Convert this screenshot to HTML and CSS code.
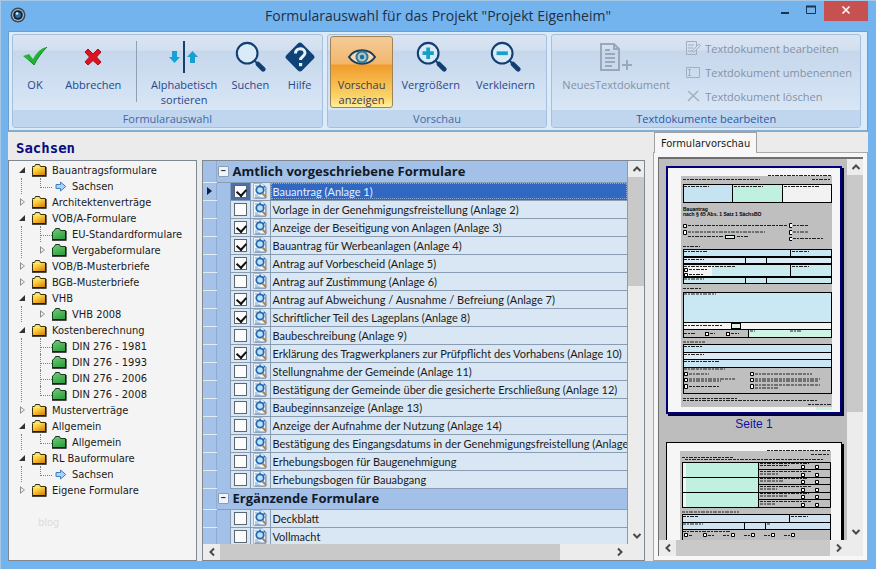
FILE: index.html
```html
<!DOCTYPE html>
<html lang="de">
<head>
  <meta charset="UTF-8" />
  <meta name="viewport" content="width=device-width, initial-scale=1.0"/>
  <title>Formularauswahl</title>
  <link rel="stylesheet" href="styles.css">
</head>
<body>
  <svg class="defs" aria-hidden="true">
    <defs>
      <linearGradient id="gold" x1="0" y1="0" x2="0.6" y2="1">
        <stop offset="0" stop-color="#fff27a"/><stop offset="0.5" stop-color="#fbd33c"/><stop offset="1" stop-color="#d98e10"/>
      </linearGradient>
      <linearGradient id="green" x1="0" y1="0" x2="0.6" y2="1">
        <stop offset="0" stop-color="#6fd078"/><stop offset="1" stop-color="#36a044"/>
      </linearGradient>
      <symbol id="folder" viewBox="0 0 16 14">
        <path d="M1.500 4.500V12.500H14.500V3.500H9.500L8.500 1.500H4.500L3.500 3.500H1.500z" fill="url(#gold)" stroke="#3a2c10"/>
        <path d="M1 13.200H15V4" fill="none" stroke="#111" stroke-width="1.200"/>
        <path d="M2 4.500H10" stroke="#f5e58a" fill="none"/>
      </symbol>
      <symbol id="folder-green" viewBox="0 0 16 14">
        <path d="M1.500 5V12.500H14.500V3.500H9.500L8.500 1.500H4.500L3.500 3.500L1.500 5z" fill="url(#green)" stroke="#143d1a"/>
        <path d="M1 13.200H15V4" fill="none" stroke="#111" stroke-width="1.200"/>
      </symbol>
      <symbol id="arrow" viewBox="0 0 12 11">
        <path d="M1 3.500H5.500V1L10.800 5.500L5.500 10V7.500H1z" fill="#a9d3f7" stroke="#3f7fc4"/>
      </symbol>
      <symbol id="preview" viewBox="0 0 16 16">
        <path d="M1.500 0.500H10L13.500 4V15.500H1.500z" fill="#eef6fc" stroke="#9db8d4"/>
        <path d="M3 3H6M3 12H6M3 14H8" stroke="#7fa3c8"/>
        <path d="M14 4V15H3" fill="none" stroke="#7c8ea6"/>
        <circle cx="8" cy="7" r="3.700" fill="#b8e3fa" stroke="#2767b0" stroke-width="1.800"/>
        <path d="M8 1.500V4M13 3L11 5" stroke="#2767b0" stroke-width="1.500"/>
        <path d="M10.500 10.500L14 14" stroke="#a8845a" stroke-width="2"/>
      </symbol>
      <symbol id="up" viewBox="0 0 10 10"><path d="M1.500 7L5 3.500L8.500 7" fill="none" stroke="#4a4a4a" stroke-width="2"/></symbol>
      <symbol id="down" viewBox="0 0 10 10"><path d="M1.500 3L5 6.500L8.500 3" fill="none" stroke="#4a4a4a" stroke-width="2"/></symbol>
      <symbol id="left" viewBox="0 0 10 10"><path d="M7 1.500L3.500 5L7 8.500" fill="none" stroke="#4a4a4a" stroke-width="2"/></symbol>
      <symbol id="right" viewBox="0 0 10 10"><path d="M3 1.500L6.500 5L3 8.500" fill="none" stroke="#4a4a4a" stroke-width="2"/></symbol>
      <symbol id="lens" viewBox="0 0 34 34">
        <circle cx="14" cy="13" r="11" fill="#d9ebf8" stroke="#123f70" stroke-width="2.200"/>
        <path d="M22 21L25 24" stroke="#123f70" stroke-width="2"/>
        <path d="M25.500 24.500L31 30" stroke="#123f70" stroke-width="5" stroke-linecap="round"/>
      </symbol>
    </defs>
  </svg>

  <div class="window">
    <header class="titlebar">
      <svg class="app-icon" viewBox="0 0 16 16">
        <circle cx="8" cy="8" r="7.500" fill="#3b4a58"/>
        <circle cx="8" cy="8" r="6" fill="#a9bccb"/>
        <circle cx="8" cy="8" r="4.800" fill="#10202f"/>
        <circle cx="8" cy="8" r="3" fill="#2d6ea5"/>
        <circle cx="7" cy="6.500" r="1.300" fill="#d5ecfa"/>
      </svg>
      <h1>Formularauswahl für das Projekt "Projekt Eigenheim"</h1>
      <div class="window-buttons">
        <button type="button" aria-label="Minimieren"><svg viewBox="0 0 12 12"><path d="M2 9H10" stroke="#1c3350" stroke-width="2"/></svg></button>
        <button type="button" aria-label="Maximieren"><svg viewBox="0 0 12 12"><path d="M1.500 2.500H10.500V9.500H1.500z" fill="none" stroke="#1c3350"/><path d="M1 2.500H11" stroke="#1c3350" stroke-width="2"/></svg></button>
        <button type="button" class="close" aria-label="Schließen"><svg viewBox="0 0 12 12"><path d="M2.500 2.500L9.500 9.500M9.500 2.500L2.500 9.500" stroke="#fff" stroke-width="1.600"/></svg></button>
      </div>
    </header>

    <nav class="ribbon">
      <section class="group">
        <div class="tools">
          <button type="button" class="tool">
            <svg viewBox="0 0 32 32"><path d="M4 15L10 13L14 18C18 11 22 7 28 6C22 12 18 18 15 24z" fill="#25b335"/><path d="M10 19L15 24C18 18 22 12 28 6" fill="none" stroke="#128a22"/></svg>
            <span>OK</span>
          </button>
          <button type="button" class="tool">
            <svg viewBox="0 0 32 32"><path d="M8 11L11 8L16 13L21 8L24 11L19.500 16L24 21L21 24L16 19.500L11 24L8 21L12.500 16z" fill="#dc1420" stroke="#a80d16"/></svg>
            <span>Abbrechen</span>
          </button>
          <span class="separator"></span>
          <button type="button" class="tool">
            <svg viewBox="0 0 32 32"><path d="M15 0H17V32H15z" fill="#123f70"/><path d="M4 10H9V16H12L6.500 22L1 16H4z" fill="#18a0d4"/><path d="M22 22H27V16H30L24.500 10L19 16H22z" fill="#18a0d4"/></svg>
            <span>Alphabetisch<br>sortieren</span>
          </button>
          <button type="button" class="tool">
            <svg viewBox="0 0 34 34"><use href="#lens"/></svg>
            <span>Suchen</span>
          </button>
          <button type="button" class="tool">
            <svg viewBox="0 0 32 32"><rect x="5" y="5" width="22" height="22" rx="3" transform="rotate(45 16 16)" fill="#0f4377"/><path d="M11.500 12.500C11.500 6 21 6.500 21 12C21 15.500 16.500 15.500 16.500 19" fill="none" stroke="#e8f1fa" stroke-width="3"/><rect x="15" y="22" width="3.200" height="3.200" fill="#e8f1fa"/></svg>
            <span>Hilfe</span>
          </button>
        </div>
        <h2>Formularauswahl</h2>
      </section>

      <section class="group">
        <div class="tools tools-zoom">
          <button type="button" class="tool active" aria-pressed="true">
            <svg viewBox="0 0 32 32"><path d="M3 16C9 7 23 7 29 16C23 25 9 25 3 16z" fill="#f6d9b3" stroke="#1d3c58" stroke-width="2"/><circle cx="16" cy="16" r="5.500" fill="#a6c6cf" stroke="#2b7896" stroke-width="2"/><circle cx="16" cy="16" r="2.200" fill="#286a89"/></svg>
            <span>Vorschau<br>anzeigen</span>
          </button>
          <button type="button" class="tool">
            <svg viewBox="0 0 34 34"><use href="#lens"/><path d="M8 13H20M14 7V19" stroke="#18a0c4" stroke-width="4"/></svg>
            <span>Vergrößern</span>
          </button>
          <button type="button" class="tool">
            <svg viewBox="0 0 34 34"><use href="#lens"/><path d="M8 13H20" stroke="#18a0c4" stroke-width="4"/></svg>
            <span>Verkleinern</span>
          </button>
        </div>
        <h2>Vorschau</h2>
      </section>

      <section class="group group-docs">
        <div class="tools tools-docs">
          <button type="button" class="tool" disabled>
            <svg viewBox="0 0 32 32"><path d="M1 3H14L19 8V29H1z M14 3V8H19" fill="none" stroke="#9ba8b8" stroke-width="2"/><path d="M5 9H10M5 13H15M5 17H15M5 21H15M5 25H12M22 24H32M27 19V29" stroke="#9ba8b8" stroke-width="2"/></svg>
            <span>NeuesTextdokument</span>
          </button>
          <div class="tool-list">
            <button type="button" class="tool-row" disabled>
              <svg viewBox="0 0 16 16"><path d="M1.500 1.500H11.500V14.500H1.500zM3 5H9M3 8H8M3 11H7" fill="none" stroke="#a3afbd"/><path d="M7 11L14 4L15.500 5.500L9 12z" fill="#d3dfec" stroke="#a3afbd"/></svg>
              Textdokument bearbeiten
            </button>
            <button type="button" class="tool-row" disabled>
              <svg viewBox="0 0 16 16"><path d="M1.500 3.500H14.500V13.500H1.500zM4.500 5.500V11.500M3 5.500H6M3 11.500H6" fill="none" stroke="#a3afbd"/></svg>
              Textdokument umbenennen
            </button>
            <button type="button" class="tool-row" disabled>
              <svg viewBox="0 0 16 16"><path d="M3 3L14 13M13 3L3 13" fill="none" stroke="#a3afbd" stroke-width="1.500"/></svg>
              Textdokument löschen
            </button>
          </div>
        </div>
        <h2>Textdokumente bearbeiten</h2>
      </section>
    </nav>

    <main class="client">
      <h2 class="region">Sachsen</h2>

      <aside class="tree">
        <ul>
          <li class="open"><div><svg><use href="#folder"/></svg>Bauantragsformulare</div>
            <ul>
              <li class="leaf target"><div><svg><use href="#arrow"/></svg>Sachsen</div></li>
            </ul>
          </li>
          <li class="closed"><div><svg><use href="#folder"/></svg>Architektenverträge</div></li>
          <li class="open"><div><svg><use href="#folder"/></svg>VOB/A-Formulare</div>
            <ul>
              <li class="leaf"><div><svg><use href="#folder-green"/></svg>EU-Standardformulare</div></li>
              <li class="closed"><div><svg><use href="#folder-green"/></svg>Vergabeformulare</div></li>
            </ul>
          </li>
          <li class="closed"><div><svg><use href="#folder"/></svg>VOB/B-Musterbriefe</div></li>
          <li class="closed"><div><svg><use href="#folder"/></svg>BGB-Musterbriefe</div></li>
          <li class="open"><div><svg><use href="#folder"/></svg>VHB</div>
            <ul>
              <li class="closed"><div><svg><use href="#folder-green"/></svg>VHB 2008</div></li>
            </ul>
          </li>
          <li class="open"><div><svg><use href="#folder"/></svg>Kostenberechnung</div>
            <ul>
              <li class="leaf"><div><svg><use href="#folder-green"/></svg>DIN 276 - 1981</div></li>
              <li class="leaf"><div><svg><use href="#folder-green"/></svg>DIN 276 - 1993</div></li>
              <li class="leaf"><div><svg><use href="#folder-green"/></svg>DIN 276 - 2006</div></li>
              <li class="leaf"><div><svg><use href="#folder-green"/></svg>DIN 276 - 2008</div></li>
            </ul>
          </li>
          <li class="closed"><div><svg><use href="#folder"/></svg>Musterverträge</div></li>
          <li class="open"><div><svg><use href="#folder"/></svg>Allgemein</div>
            <ul>
              <li class="leaf"><div><svg><use href="#folder-green"/></svg>Allgemein</div></li>
            </ul>
          </li>
          <li class="open"><div><svg><use href="#folder"/></svg>RL Bauformulare</div>
            <ul>
              <li class="leaf target"><div><svg><use href="#arrow"/></svg>Sachsen</div></li>
            </ul>
          </li>
          <li class="closed"><div><svg><use href="#folder"/></svg>Eigene Formulare</div></li>
        </ul>
        <p class="watermark">blog</p>
      </aside>

      <section class="forms">
        <div class="forms-body">
          <table>
            <colgroup><col class="c-mark"><col class="c-indent"><col class="c-check"><col class="c-icon"><col></colgroup>
            <tbody id="formRows"></tbody>
          </table>
        </div>
        <div class="vscroll">
          <button type="button" aria-label="Nach oben"><svg><use href="#up"/></svg></button>
          <div class="track"><div class="thumb thumb-list"></div></div>
          <button type="button" aria-label="Nach unten"><svg><use href="#down"/></svg></button>
        </div>
        <div class="hscroll">
          <button type="button" aria-label="Nach links"><svg><use href="#left"/></svg></button>
          <div class="track"><div class="thumb thumb-wide"></div></div>
          <button type="button" aria-label="Nach rechts"><svg><use href="#right"/></svg></button>
        </div>
      </section>

      <section class="preview">
        <div class="tabs"><button type="button" class="tab">Formularvorschau</button></div>
        <div class="tab-panel">
          <div class="viewer">
            <div class="pages">
              <div class="page page-current">
                <svg viewBox="668 167 172 244">
                  <rect x="681" y="175" width="151" height="231" fill="#bfbfbf"/>
                  <g class="ink">
                    <path d="M768 174.500H832M683 178.500H760M812 178.500H831"/>
                    <path d="M688 224.500H787M688 231H765M688 235.500H724M737 235.500H749M793 224.500H809M793 231H808M793 237.500H823"/>
                    <path d="M683 245.500H700M683 287.500H702M683 341H705"/>
                    <path d="M683 397.500H737M683 399.500H817M808 403.500H831"/>
                  </g>
                  <text x="683" y="209.500" class="doc-title">Bauantrag</text>
                  <text x="683" y="214.500" class="doc-sub">nach § 65 Abs. 1 Satz 1 SächsBO</text>
                  <g class="box">
                    <rect x="683.500" y="183.500" width="49" height="18" fill="#c5e3f2"/>
                    <rect x="732.500" y="183.500" width="50" height="18" fill="#bff0e0"/>
                    <rect x="782.500" y="183.500" width="49" height="18" fill="#f2f2f2"/>
                    <path d="M683.500 223.500h3v3h-3zM683.500 229.500h3v4h-3z" fill="#fff"/>
                    <path d="M792 222.500H789.500V226.500H792M792 229.500H789.500V233.500H792M792 236.500H789.500V239.500H792" fill="#fff"/>
                    <rect x="725.500" y="234.500" width="9" height="3" fill="#d9f5ea"/>
                    <rect x="683.500" y="248.500" width="148" height="7" fill="#c9e6f3"/>
                    <rect x="683.500" y="256.500" width="148" height="6" fill="#dbeaf4"/>
                    <rect x="683.500" y="263.500" width="148" height="12" fill="#c9eaee"/>
                    <rect x="683.500" y="276.500" width="148" height="6" fill="#c9eaee"/>
                    <path d="M790.500 248V256M745.500 256V263M766.500 256V263M790.500 264V276M745.500 276V283M766.500 276V283"/>
                    <rect x="683.500" y="291.500" width="148" height="30" fill="#c9e8f3"/>
                    <rect x="683.500" y="321.500" width="148" height="7" fill="#f4f4f4"/>
                    <rect x="731.500" y="322.500" width="9" height="5" fill="#d9f5ea"/>
                    <rect x="683.500" y="328.500" width="65" height="8" fill="#bfbfbf"/>
                    <rect x="748.500" y="328.500" width="83" height="8" fill="#cdf3e6"/>
                    <rect x="705.500" y="331.500" width="3" height="3" fill="#fff"/>
                    <rect x="726.500" y="331.500" width="3" height="3" fill="#fff"/>
                    <rect x="683.500" y="343.500" width="148" height="8" fill="#c9e6f3"/>
                    <rect x="683.500" y="351.500" width="148" height="7" fill="#dbeaf4"/>
                    <rect x="683.500" y="358.500" width="148" height="8" fill="#c9e6f3"/>
                    <rect x="683.500" y="366.500" width="148" height="26" fill="#bfbfbf"/>
                    <path d="M684.500 371.500h3v3h-3zM684.500 377.500h3v3h-3zM684.500 383.500h3v4h-3zM750.500 371.500h3v3h-3zM750.500 377.500h3v3h-3zM750.500 383.500h3v4h-3z" fill="#fff"/>
                  </g>
                  <path d="M684 265H712V275H684z" fill="#f4f4f4"/>
                  <path d="M684.500 267.500h3v3h-3zM684.500 272.500h3v3h-3z" class="box" fill="#fff"/>
                  <g class="ink">
                    <path d="M684 185.500H709M734 185.500H763M784 185.500H820"/>
                    <path d="M684 250.500H707M792 250.500H809M684 258.500H704M684 265.500H736M792 265.500H809M689 268.500H708M689 273.500H703M684 278H704"/>
                    <path d="M684 293H716M684 324.500H722M684 332.500H695M710 332.500H715M731 332.500H739M750 330H755M790 330H801"/>
                    <path d="M684 345.500H703M684 353.500H704M684 360.500H719M684 368H725M689 373H709M755 373H812M689 378H735M689 380H721M755 378H820M755 380H818M689 385.500H719M755 384H820M755 387H778"/>
                  </g>
                  <rect x="816" y="406" width="16" height="3" fill="#cdf3e6"/>
                </svg>
              </div>
              <a href="#seite-1" class="page-label">Seite 1</a>
              <div class="page page-next">
                <svg viewBox="668 444 174 246">
                  <rect x="681" y="452" width="151" height="230" fill="#bfbfbf"/>
                  <g class="box">
                    <rect x="683.500" y="463.500" width="76" height="15" fill="#bff0e0"/>
                    <rect x="683.500" y="478.500" width="76" height="15" fill="#bff0e0"/>
                    <rect x="683.500" y="493.500" width="76" height="15" fill="#bff0e0"/>
                    <path d="M759.500 463.500H831.500V508.500H759.500M759.500 470.500H831.500M759.500 478.500H831.500M759.500 485.500H831.500M759.500 493.500H831.500M759.500 500.500H831.500" fill="none"/>
                    <path d="M802.500 466.500h3v3h-3zM816.500 466.500h3v3h-3zM802.500 474.500h3v3h-3zM816.500 474.500h3v3h-3zM802.500 481.500h3v3h-3zM816.500 481.500h3v3h-3zM802.500 489.500h3v3h-3zM816.500 489.500h3v3h-3zM802.500 496.500h3v3h-3zM816.500 496.500h3v3h-3zM802.500 504.500h3v3h-3zM816.500 504.500h3v3h-3z" fill="#fff"/>
                    <rect x="683.500" y="515.500" width="148" height="8" fill="#cfe3f2"/>
                    <rect x="683.500" y="523.500" width="148" height="7" fill="#cfe3f2"/>
                    <rect x="683.500" y="530.500" width="148" height="40" fill="#bfbfbf"/>
                    <path d="M790.500 516V523M745.500 523V530M766.500 523V530"/>
                    <path d="M685.500 534.500h3v3h-3zM704.500 534.500h3v3h-3zM732.500 534.500h3v3h-3zM752.500 534.500h3v3h-3zM772.500 534.500h3v3h-3zM792.500 534.500h3v3h-3z" fill="#fff"/>
                  </g>
                  <path d="M684 464H687V478H684zM684 479H687V493H684zM684 494H687V508H684z" fill="#f4f4f4"/>
                  <g class="ink">
                    <path d="M768 451.500H832M812 455.500H831M683 458.500H735M686 460.500H824M683 513H740"/>
                    <path d="M761 464.500H810M761 466.500H790M761 472.500H812M761 475H780M761 479.500H808M761 482H785M761 487.500H812M761 490H778M761 494.500H810M761 497H788M761 502.500H812M761 505H777"/>
                    <path d="M684 517.500H700M792 517.500H809M684 525H704M768 525H772M684 532.500H732M690 536.500H693M709 536.500H716M724 536.500H731M745 536.500H751M765 536.500H771M785 536.500H791"/>
                  </g>
                </svg>
              </div>
            </div>
            <div class="vscroll">
              <button type="button" aria-label="Nach oben"><svg><use href="#up"/></svg></button>
              <div class="track"><div class="thumb thumb-pages"></div></div>
              <button type="button" aria-label="Nach unten"><svg><use href="#down"/></svg></button>
            </div>
            <div class="hscroll">
              <button type="button" aria-label="Nach links"><svg><use href="#left"/></svg></button>
              <div class="track"><div class="thumb"></div></div>
              <button type="button" aria-label="Nach rechts"><svg><use href="#right"/></svg></button>
            </div>
          </div>
        </div>
      </section>
    </main>
  </div>

  <script src="script.js"></script>
</body>
</html>
```

FILE: styles.css
```css
* {
  box-sizing: border-box;
}

body {
  margin: 0;
  font-family: "DejaVu Sans Condensed", "Open Sans", sans-serif;
  font-size: 11px;
  color: #1a1a1a;
}

h1, h2, p, ul {
  margin: 0;
  padding: 0;
  font-weight: normal;
}

button {
  margin: 0;
  padding: 0;
  border: 0;
  background: none;
  font: inherit;
  color: inherit;
}

.defs {
  position: absolute;
  width: 0;
  height: 0;
}

.window {
  display: flex;
  flex-direction: column;
  height: 100vh;
  padding: 0 8px 8px 7px;
  background: #74b4ee;
  border: 1px solid #a6c8e4;
  border-width: 1px 0 0 1px;
  overflow: hidden;
}

/* title bar */
.titlebar {
  display: grid;
  grid-template-columns: 96px 1fr 96px;
  height: 30px;
  font-family: "Open Sans", "Noto Sans", sans-serif;
}

.app-icon {
  width: 16px;
  height: 16px;
  margin: 6px 0 0 2px;
}

.titlebar h1 {
  font-size: 14px;
  line-height: 29px;
  text-align: center;
  color: #1d3048;
  white-space: nowrap;
}

.window-buttons {
  display: flex;
  justify-content: flex-end;
  height: 20px;
}

.window-buttons button {
  width: 26px;
}

.window-buttons svg {
  width: 12px;
  height: 12px;
}

.window-buttons .close {
  width: 44px;
  background: #c75050;
}

/* ribbon */
.ribbon {
  display: grid;
  grid-template-columns: 311fr 221fr 310fr;
  gap: 4px;
  padding: 2px 6px 2px 3px;
  background: #dcebf9;
  border: 1px solid #6d9dc9;
  border-bottom: 2px solid #86abd0;
  font-family: "Open Sans", "Noto Sans", sans-serif;
}

.group {
  display: flex;
  flex-direction: column;
  border: 1px solid #a5bfdc;
  border-radius: 3px;
  background: linear-gradient(#dae5f3 0, #d2dfef 15px, #c6d7ec 16px, #d8e6f6 75px);
}

.group h2 {
  background: #c0d6ef;
  color: #4468a6;
  font-size: 11px;
  line-height: 17px;
  text-align: center;
}

.group-docs h2 {
  color: #2b58a8;
}

.tools {
  display: flex;
  justify-content: space-between;
  height: 75px;
  padding: 1px 6px 2px;
}

.tools-zoom {
  justify-content: flex-start;
  padding: 1px 2px 2px;
}

.tools-docs {
  padding: 1px 8px 2px 10px;
}

.tool {
  display: flex;
  flex-direction: column;
  align-items: center;
  min-width: 32px;
  padding-top: 5px;
  font-size: 11px;
  line-height: 15px;
  color: #27478c;
}

.tool svg {
  width: 32px;
  height: 32px;
  margin-bottom: 4px;
  flex: none;
}

.tools-zoom .tool {
  padding: 5px 8px 0;
}

.tools-zoom .active {
  padding: 4px 7px 0;
  border: 1px solid #a08354;
  border-radius: 3px;
  background: linear-gradient(#f3cb98 0, #f2b76c 27px, #f19b2c 28px, #fad568 60px, #fff0a0);
  color: #3c3a4e;
}

.separator {
  width: 1px;
  margin: 5px 0 6px;
  background: #8f9fb4;
}

.tool:disabled, .tool-row:disabled {
  color: #8592a5;
}

.tool-list {
  display: flex;
  flex-direction: column;
}

.tool-row {
  display: flex;
  align-items: center;
  gap: 4px;
  height: 24px;
  white-space: nowrap;
}

.tool-row svg {
  width: 16px;
  height: 16px;
}

/* client area */
.client {
  flex: 1;
  min-height: 0;
  display: grid;
  grid-template-columns: 189px minmax(0, 1fr) 218px;
  grid-template-rows: 28px minmax(0, 1fr);
  column-gap: 5px;
  background: #ebebeb;
}

.region {
  grid-column: 1 / 3;
  padding-left: 8px;
  font-family: "DejaVu Sans Mono", monospace;
  font-size: 14px;
  font-weight: bold;
  line-height: 32px;
  color: #0b0b80;
}

/* tree */
.tree {
  padding: 1px 0 0 7px;
  background: #f4f4f4;
  border: 1px solid #7f8790;
  overflow: hidden;
}

.tree ul {
  list-style: none;
}

.tree li {
  position: relative;
}

.tree li div {
  display: flex;
  align-items: center;
  gap: 5px;
  height: 16px;
  padding-left: 15px;
  white-space: nowrap;
}

.tree svg {
  width: 16px;
  height: 14px;
}

.tree li ul {
  margin-left: 5px;
  padding-left: 14px;
  border-left: 1px dotted #808080;
}

.tree .leaf::before {
  content: "";
  position: absolute;
  top: 0;
  left: 4px;
  width: 11px;
  height: 9px;
  border-left: 1px dotted #808080;
  border-bottom: 1px dotted #808080;
}

.tree .leaf:not(:last-child)::after {
  content: "";
  position: absolute;
  top: 9px;
  left: 4px;
  height: 7px;
  border-left: 1px dotted #808080;
}

.tree .target svg {
  width: 12px;
  height: 11px;
  margin-left: 4px;
}

.tree .open::before, .tree .closed::before {
  content: "";
  position: absolute;
  top: 5px;
  left: 3px;
  width: 6px;
  height: 6px;
  background: #333;
  clip-path: polygon(100% 0, 100% 100%, 0 100%);
}

.tree .closed::before {
  top: 4px;
  left: 4px;
  width: 5px;
  height: 8px;
  background: #8c8c8c;
  clip-path: polygon(0 0, 100% 50%, 0 100%, 0 0, 1px 2px, 1px 6px, 4px 50%, 1px 2px);
}

.watermark {
  padding: 18px 0 0 22px;
  color: #dcdcdc;
}

/* list of forms and scroll bars */
.forms, .viewer {
  display: grid;
  grid-template-columns: minmax(0, 1fr) 16px;
  grid-template-rows: minmax(0, 1fr) 16px;
  background: #ececec;
}

.forms {
  border: 1px solid #7f8790;
}

.forms-body {
  overflow: hidden;
  background: #a2c0e8;
}

.forms table {
  width: 100%;
  table-layout: fixed;
  border-collapse: collapse;
  font-family: Lato, "Liberation Sans", sans-serif;
  font-size: 11px;
}

.c-mark {
  width: 13px;
}

.c-indent {
  width: 14px;
}

.c-check {
  width: 20px;
}

.c-icon {
  width: 20px;
}

.forms td {
  height: 18px;
  padding: 0;
  border: 1px solid #8a9cb2;
  border-width: 0 1px 1px 0;
  background: #d9e7f4;
  line-height: 17px;
  white-space: nowrap;
  overflow: hidden;
}

.forms td:first-child {
  background: #a5c3ea;
  border-color: #e0ecf8 #8eabd0;
}

.forms td.indent {
  background: #a2c0e8;
  border-bottom: 0;
}

.forms .head td {
  height: 21px;
  background: #a2c0e8;
  font-family: "Open Sans", "Noto Sans", sans-serif;
}

.forms .head button {
  display: flex;
  align-items: center;
  gap: 4px;
  font-size: 13px;
  font-weight: bold;
  color: #111a28;
}

.head button::before {
  content: "−";
  width: 9px;
  height: 9px;
  margin-left: 1px;
  border: 1px solid #8c9cb4;
  border-radius: 1px;
  background: #f0f4fa;
  font-size: 9px;
  line-height: 7px;
}

.forms td svg {
  display: block;
  width: 16px;
  height: 16px;
  margin: 0 auto;
}

.forms input {
  appearance: none;
  display: block;
  position: relative;
  width: 13px;
  height: 13px;
  margin: 0 auto;
  border: 1px solid #5c6670;
  background: #fcfcfc;
}

.forms input:checked::after {
  content: "";
  position: absolute;
  top: 1px;
  left: 3px;
  width: 5px;
  height: 7px;
  border: solid #111;
  border-width: 0 2px 2px 0;
  transform: rotate(42deg);
}

.forms label {
  display: block;
  padding-left: 2px;
}

.forms .selected td:nth-child(3) {
  background: #4a70b4;
}

.forms .selected td:last-child {
  background: #3068c2;
  color: #e6f0ff;
  outline: 1px dotted #8aa8d8;
  outline-offset: -2px;
}

.forms .selected td:first-child::before {
  content: "";
  display: block;
  width: 5px;
  height: 8px;
  margin-left: 4px;
  background: #10243c;
  clip-path: polygon(0 0, 100% 50%, 0 100%);
}

.vscroll, .hscroll {
  display: flex;
  background: #ececec;
}

.vscroll {
  flex-direction: column;
}

.hscroll {
  grid-column: 1;
}

.vscroll button, .hscroll button {
  width: 17px;
  height: 16px;
  line-height: 0;
}

.vscroll svg, .hscroll svg {
  width: 10px;
  height: 10px;
}

.track {
  flex: 1;
}

.thumb {
  width: 100%;
  height: 100%;
  background: #c9c9c9;
}

.thumb-list {
  height: 31%;
}

.thumb-wide {
  width: 87%;
}

.thumb-pages {
  height: 68%;
}

/* preview */
.preview {
  grid-column: 3;
  grid-row: 1 / 3;
  display: flex;
  flex-direction: column;
  margin-left: 3px;
}

.tabs {
  display: flex;
  height: 20px;
}

.tab {
  position: relative;
  height: 21px;
  margin-left: 1px;
  padding: 0 6px;
  border: 1px solid #a0a0a0;
  border-bottom: 0;
  background: #f7f7f7;
  z-index: 1;
}

.tab-panel {
  flex: 1;
  min-height: 0;
  display: flex;
  padding: 4px;
  border: 1px solid #a9a9a9;
  background: #f7f7f7;
}

.viewer {
  flex: 1;
  border: 1px solid #6f6f6f;
  border-width: 2px 0 0 1px;
}

.pages {
  display: flex;
  flex-direction: column;
  align-items: center;
  padding: 7px 5px 0 7px;
  background: #bdbdbd;
  overflow: hidden;
}

.page {
  flex: none;
  width: 100%;
  background: #f6f6f6;
  border: 1px solid #000;
  box-shadow: 2px 2px 0 #000;
}

.page svg {
  display: block;
  width: 100%;
}

.page-current {
  border: 2px solid #00007c;
  box-shadow: 2px 2px 0 #00003c;
}

.page-label {
  padding-bottom: 8px;
  font-family: "Liberation Sans", Arial, sans-serif;
  font-size: 12px;
  line-height: 20px;
  color: #1212a0;
  text-decoration: none;
}

.ink path {
  fill: none;
  stroke: #222;
  stroke-dasharray: 3 1 2 1 4 1;
}

.box {
  stroke: #000;
}

.doc-title, .doc-sub {
  font-family: "Liberation Sans", Arial, sans-serif;
  font-size: 5px;
  font-weight: bold;
}
```

FILE: script.js
```js
var groups = [
  {
    title: "Amtlich vorgeschriebene Formulare",
    forms: [
      ["Bauantrag (Anlage 1)", true],
      ["Vorlage in der Genehmigungsfreistellung (Anlage 2)", false],
      ["Anzeige der Beseitigung von Anlagen (Anlage 3)", true],
      ["Bauantrag für Werbeanlagen (Anlage 4)", true],
      ["Antrag auf Vorbescheid (Anlage 5)", true],
      ["Antrag auf Zustimmung (Anlage 6)", false],
      ["Antrag auf Abweichung / Ausnahme / Befreiung (Anlage 7)", true],
      ["Schriftlicher Teil des Lageplans (Anlage 8)", true],
      ["Baubeschreibung (Anlage 9)", false],
      ["Erklärung des Tragwerkplaners zur Prüfpflicht des Vorhabens (Anlage 10)", true],
      ["Stellungnahme der Gemeinde (Anlage 11)", false],
      ["Bestätigung der Gemeinde über die gesicherte Erschließung (Anlage 12)", false],
      ["Baubeginnsanzeige (Anlage 13)", false],
      ["Anzeige der Aufnahme der Nutzung (Anlage 14)", false],
      ["Bestätigung des Eingangsdatums in der Genehmigungsfreistellung (Anlage 15)", false],
      ["Erhebungsbogen für Baugenehmigung", false],
      ["Erhebungsbogen für Bauabgang", false]
    ]
  },
  {
    title: "Ergänzende Formulare",
    forms: [
      ["Deckblatt", false],
      ["Vollmacht", false]
    ]
  }
];

var html = "";
var nr = 0;

groups.forEach(function(group) {
  html += '<tr class="head"><td></td><td colspan="4"><button type="button">' + group.title + '</button></td></tr>';
  group.forms.forEach(function(form) {
    nr++;
    html += '<tr' + (nr === 1 ? ' class="selected"' : '') + '>'
      + '<td></td><td class="indent"></td>'
      + '<td><input type="checkbox" id="form' + nr + '"' + (form[1] ? ' checked' : '') + '></td>'
      + '<td><svg><use href="#preview"/></svg></td>'
      + '<td><label for="form' + nr + '">' + form[0] + '</label></td></tr>';
  });
});

document.getElementById("formRows").innerHTML = html;
```
